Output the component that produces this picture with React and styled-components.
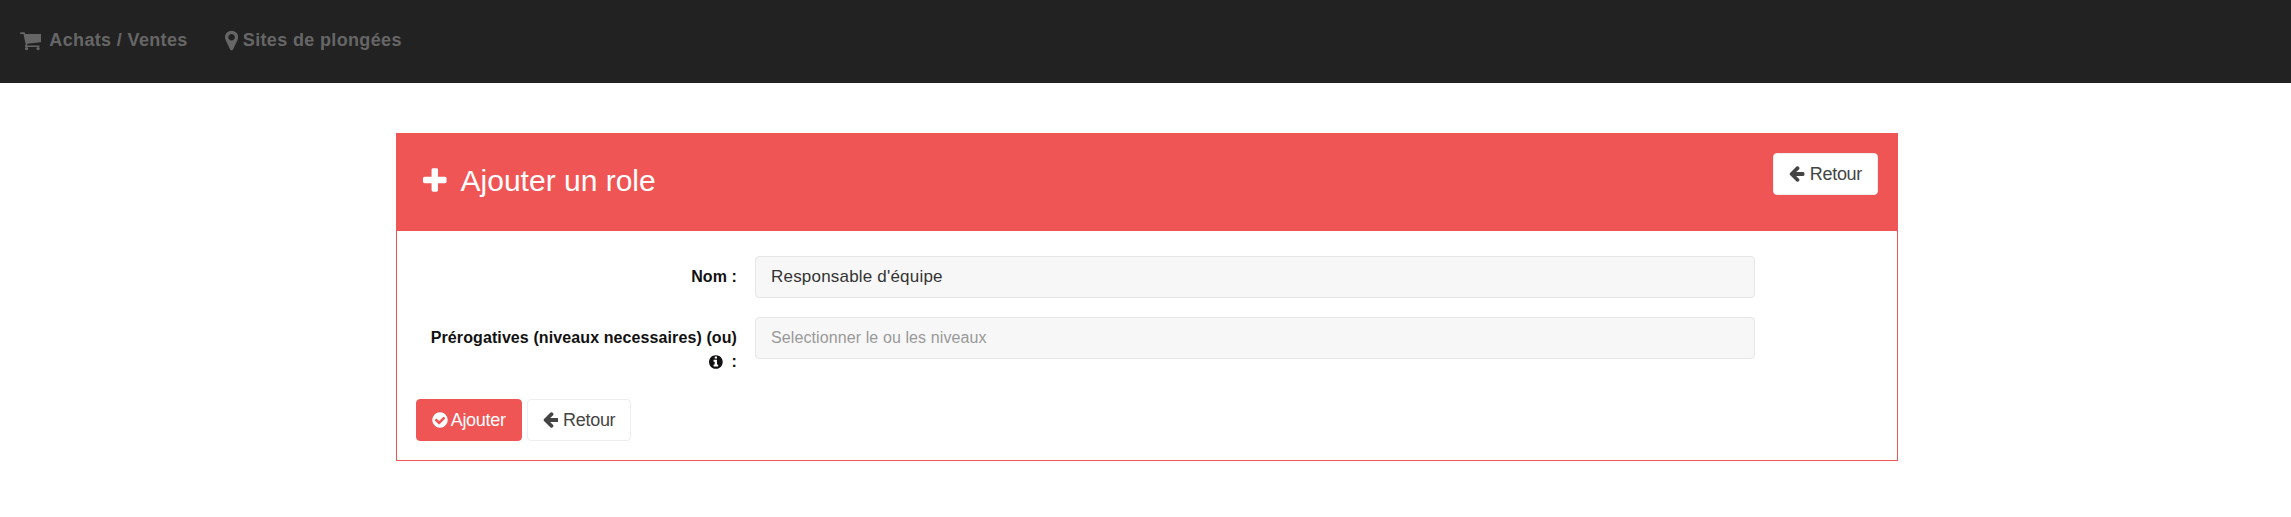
import React from 'react';
import styled, { createGlobalStyle } from 'styled-components';

const GlobalStyle = createGlobalStyle`
  html, body {
    margin: 0;
    padding: 0;
    background: #fff;
    font-family: "Liberation Sans", Arial, sans-serif;
    font-size: 14px;
    color: #333;
  }
  * { box-sizing: border-box; }
`;

// font awesome 4 glyphs, the icon packages only carry the newer shapes
const GLYPHS = {
  cart: [1664, 'M640 1536q0 52-38 90t-90 38-90-38-38-90 38-90 90-38 90 38 38 90zm896 0q0 52-38 90t-90 38-90-38-38-90 38-90 90-38 90 38 38 90zm128-1088v512q0 24-16.5 42.5t-40.5 21.5l-1044 122q13 60 13 70 0 16-24 64h920q26 0 45 19t19 45-19 45-45 19h-1024q-26 0-45-19t-19-45q0-11 8-31.5t16-36 21.5-40 15.5-29.5l-177-823h-204q-26 0-45-19t-19-45 19-45 45-19h256q16 0 28.5 6.5t19.5 15.5 13 24.5 8 26 5.5 29.5 4.5 26h1201q26 0 45 19t19 45z'],
  marker: [1024, 'M768 640q0-106-75-181t-181-75-181 75-75 181 75 181 181 75 181-75 75-181zm256 0q0 109-33 179l-364 774q-16 33-47.5 52t-67.5 19-67.5-19-46.5-52l-365-774q-33-70-33-179 0-212 150-362t362-150 362 150 150 362z'],
  plus: [1408, 'M1408 736v192q0 40-28 68t-68 28h-416v416q0 40-28 68t-68 28h-192q-40 0-68-28t-28-68v-416h-416q-40 0-68-28t-28-68v-192q0-40 28-68t68-28h416v-416q0-40 28-68t68-28h192q40 0 68 28t28 68v416h416q40 0 68 28t28 68z'],
  back: [1536, 'M1536 832v128q0 53-32.5 90.5t-84.5 37.5h-704l293 294q38 36 38 90t-38 90l-75 76q-38 38-90 38-53 0-91-38l-651-652q-37-37-37-90 0-52 37-91l651-650q38-38 91-38 52 0 90 38l75 74q38 38 38 91t-38 91l-293 293h704q52 0 84.5 37.5t32.5 90.5z'],
  check: [1664, 'M1412 734q0-28-18-46l-91-90q-19-19-45-19t-45 19l-408 407-226-226q-19-19-45-19t-45 19l-91 90q-18 18-18 46 0 27 18 45l362 362q19 19 45 19 27 0 46-19l543-543q18-18 18-45zm252 162q0 209-103 385.5t-279.5 279.5-385.5 103-385.5-103-279.5-279.5-103-385.5 103-385.5 279.5-279.5 385.5-103 385.5 103 279.5 279.5 103 385.5z'],
  info: [1536, 'M1024 1376v-160q0-14-9-23t-23-9h-96v-512q0-14-9-23t-23-9h-320q-14 0-23 9t-9 23v160q0 14 9 23t23 9h96v320h-96q-14 0-23 9t-9 23v160q0 14 9 23t23 9h448q14 0 23-9t9-23zm-128-896v-160q0-14-9-23t-23-9h-192q-14 0-23 9t-9 23v160q0 14 9 23t23 9h192q14 0 23-9t9-23zm640 416q0 209-103 385.5t-279.5 279.5-385.5 103-385.5-103-279.5-279.5-103-385.5 103-385.5 279.5-279.5 385.5-103 385.5 103 279.5 279.5 103 385.5z'],
};

const Icon = ({ name, size }) => {
  const [width, path] = GLYPHS[name];
  return (
    <svg width={(size * width) / 1792} height={size} viewBox={`0 0 ${width} 1792`} fill="currentColor">
      <path d={path} />
    </svg>
  );
};

const Navbar = styled.nav`
  height: 83px;
  background: #222;
  display: flex;
  align-items: center;
  padding: 0 0 2px 20px;
`;

const NavLink = styled.a`
  display: flex;
  align-items: center;
  gap: ${props => props.$gap}px;
  margin-right: 37px;
  color: #666;
  font-size: 18px;
  font-weight: 700;
  letter-spacing: 0.35px;
`;

const Panel = styled.section`
  width: 1502px;
  margin: 50px 0 0 396px;
  border: 1px solid #f05555;
`;

const PanelHeader = styled.header`
  height: 98px;
  margin: -1px -1px 0;
  background: #f05555;
  display: flex;
  align-items: flex-start;
  justify-content: space-between;
  padding: 20px 20px 0 27px;
`;

const Title = styled.h2`
  display: flex;
  align-items: center;
  gap: 14px;
  margin: 11px 0 0;
  color: #fff;
  font-size: 30px;
  font-weight: 400;
  line-height: 33px;
`;

const PanelBody = styled.div`
  padding: 25px 19px 19px;
`;

const FormRow = styled.div`
  display: flex;
  gap: 18px;
  margin-bottom: 19px;
`;

const Label = styled.label`
  width: 321px;
  padding-top: 9px;
  text-align: right;
  color: #111;
  font-size: 16px;
  font-weight: 700;
  line-height: 24px;
  letter-spacing: 0.1px;
`;

const InfoMark = styled.span`
  display: inline-flex;
  vertical-align: -3px;
  margin-right: 9px;
`;

const Input = styled.div`
  width: 1000px;
  height: 42px;
  display: flex;
  align-items: center;
  padding: 0 15px;
  background: #f7f7f7;
  border: 1px solid #e6e6e6;
  border-radius: 4px;
  font-size: ${props => (props.$placeholder ? 16 : 17)}px;
  letter-spacing: ${props => (props.$placeholder ? 0.1 : 0.2)}px;
  color: ${props => (props.$placeholder ? '#999' : '#333')};
`;

const Actions = styled.div`
  display: flex;
  gap: 5px;
  margin-top: 25px;
`;

const Button = styled.button`
  height: 42px;
  display: inline-flex;
  align-items: center;
  gap: ${props => props.$gap}px;
  padding: 0 15px 0 ${props => (props.$primary ? 14 : 15)}px;
  font-family: inherit;
  font-size: 18px;
  letter-spacing: -0.3px;
  border-radius: 4px;
  border: 1px solid ${props => (props.$primary ? '#f05555' : '#eee')};
  background: ${props => (props.$primary ? '#f05555' : '#fff')};
  color: ${props => (props.$primary ? '#fff' : '#444')};
`;

const App = () => (
  <>
    <GlobalStyle />
    <Navbar>
      <NavLink $gap={8}><Icon name="cart" size={23} />Achats / Ventes</NavLink>
      <NavLink $gap={5}><Icon name="marker" size={23} />Sites de plongées</NavLink>
    </Navbar>
    <Panel>
      <PanelHeader>
        <Title><Icon name="plus" size={30} />Ajouter un role</Title>
        <Button $gap={5}><Icon name="back" size={18} />Retour</Button>
      </PanelHeader>
      <PanelBody>
        <FormRow>
          <Label>Nom :</Label>
          <Input>Responsable d'équipe</Input>
        </FormRow>
        <FormRow>
          <Label>
            Prérogatives (niveaux necessaires) (ou)
            <br />
            <InfoMark><Icon name="info" size={16} /></InfoMark>:
          </Label>
          <Input $placeholder>Selectionner le ou les niveaux</Input>
        </FormRow>
        <Actions>
          <Button $primary $gap={3}><Icon name="check" size={18} />Ajouter</Button>
          <Button $gap={5}><Icon name="back" size={18} />Retour</Button>
        </Actions>
      </PanelBody>
    </Panel>
  </>
);

export default App;
